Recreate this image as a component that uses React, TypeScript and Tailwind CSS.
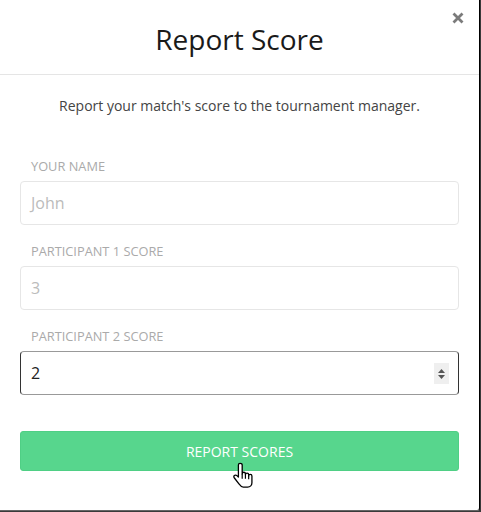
import React from "react";

function Label({ children, mt }: { children: React.ReactNode; mt: string }) {
  return (
    <div className={`${mt} mb-[7px] pl-[11px] text-[12.8px] leading-[16px] text-[#aaaaaa] uppercase`}>
      {children}
    </div>
  );
}

export default function App() {
  return (
    <div className="w-[481px] h-[512px] bg-[#3a3a3a] overflow-hidden" style={{ fontFamily: '"Open Sans", "Noto Sans", sans-serif' }}>
      <div className="w-[479px] h-[510px] bg-white rounded-br-[3px] border-r border-b border-r-black border-b-[#666] box-content relative">
        <div className="relative h-[75px] border-b border-[#e5e5e5] flex items-center justify-center">
          <h1 className="text-[28px] leading-[36px] text-[#1a1a1a] mt-[4px]">Report Score</h1>
          <svg className="absolute left-[452px] top-[12px]" width="12" height="12" viewBox="0 0 12 12">
            <path d="M1.5 1.5 L10.5 10.5 M10.5 1.5 L1.5 10.5" stroke="#7b7b7b" strokeWidth="2.8" strokeLinecap="butt" />
          </svg>
        </div>
        <div className="px-[20px]">
          <p className="mt-[21px] text-center text-[14px] leading-[20px] text-[#444]">
            Report your match's score to the tournament manager.
          </p>
          <Label mt="mt-[42px]">Your Name</Label>
          <div className="h-[44px] border border-[#e6e6e6] rounded-[4px] flex items-center pl-[10px] text-[16px] text-[#bbbbbb]">
            John
          </div>
          <Label mt="mt-[18px]">Participant 1 Score</Label>
          <div className="h-[44px] border border-[#e6e6e6] rounded-[4px] flex items-center pl-[10px] text-[16px] text-[#bbbbbb]">
            3
          </div>
          <Label mt="mt-[18px]">Participant 2 Score</Label>
          <div className="relative h-[44px] border-y border-x border-y-[#999] border-x-[#333] rounded-[4px] flex items-center pl-[10px] text-[16px] text-[#222]">
            2
            <div className="absolute left-[413px] top-[11px] w-[15px] h-[21px] bg-[#efefef] flex items-center justify-center">
              <svg width="9" height="14" viewBox="0 0 9 14">
                <path d="M4.5 2 L8 6 L1 6 Z" fill="#555" />
                <path d="M1 8 L8 8 L4.5 12 Z" fill="#555" />
              </svg>
            </div>
          </div>
          <div className="relative mt-[36px] h-[40px] bg-[#57d68d] border border-[#4fcf85] rounded-[3px] flex items-center justify-center text-white text-[14px]">
            REPORT SCORES
            <svg className="absolute left-[212px] top-[30px]" width="20" height="27" viewBox="0 0 18.5 24">
              <path
                d="M6.5 0.8 C5.6 0.8 5 1.5 5 2.3 V13.5 L3.6 12.1 C2.9 11.4 1.9 11.4 1.3 12 C0.7 12.6 0.7 13.6 1.3 14.3 L5.5 19.8 C6.6 21.3 7.8 22.8 9.5 22.8 H13.5 C15.9 22.8 17.5 21 17.5 18.8 V12.5 C17.5 11.7 16.8 11 16 11 C15.2 11 14.5 11.7 14.5 12.5 V11.3 C14.5 10.5 13.8 9.8 13 9.8 C12.2 9.8 11.5 10.5 11.5 11.3 V10.5 C11.5 9.7 10.8 9 10 9 C9.2 9 8.5 9.7 8.5 10.5 V2.3 C8.5 1.5 7.8 0.8 6.5 0.8 Z"
                fill="white"
                stroke="black"
                strokeWidth="1.2"
                strokeLinejoin="round"
              />
              <path d="M8.5 10.5 V15 M11.5 11.3 V15 M14.5 12.5 V15.5" stroke="black" strokeWidth="1.1" />
            </svg>
          </div>
        </div>
      </div>
    </div>
  );
}
